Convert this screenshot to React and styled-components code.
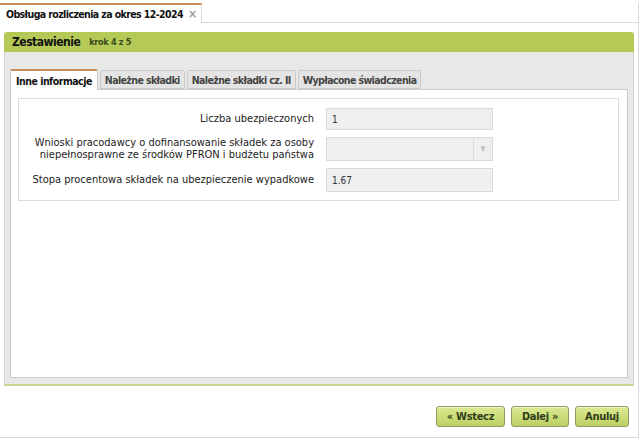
import styled, { createGlobalStyle } from "styled-components";

const FONT = `"DejaVu Sans Condensed", "Liberation Sans", Arial, sans-serif`;

const Global = createGlobalStyle`
  body {
    margin: 0;
    font-family: ${FONT};
    font-size: 11px;
    color: #222;
    background: #fff;
  }
`;

const Page = styled.div`
  width: 642px;
  height: 440px;
  display: flex;
  flex-direction: column;
`;

const TabStrip = styled.div`
  display: flex;
  height: 23px;
  padding-top: 3px;
  box-sizing: border-box;
  width: 639px;
`;

const DocTab = styled.div`
  display: flex;
  align-items: center;
  gap: 5px;
  padding: 0 10px 0 6px;
  width: 202px;
  box-sizing: border-box;
  border-top: 2px solid #c38d55;
  border-right: 1px solid #d8d8e0;
  font-weight: bold;
  font-size: 10.5px;
  letter-spacing: -0.6px;
  color: #111;
  white-space: nowrap;
`;

const Close = styled.span`
  color: #9a9a9a;
  font-size: 12px;
  font-weight: bold;
`;

const StripRest = styled.div`
  flex: 1;
  border-bottom: 1px solid #d8d8e0;
  border-right: 1px solid #d8d8e0;
`;

const Main = styled.div`
  width: 639px;
  height: 415px;
  box-sizing: border-box;
  border-right: 1px solid #d8d8e0;
  border-bottom: 1px solid #d8d8e0;
  padding: 9px 4px 0 4px;
  display: flex;
  flex-direction: column;
`;

const Panel = styled.div`
  display: flex;
  flex-direction: column;
  width: 630px;
`;

const PanelHead = styled.div`
  height: 20px;
  background: #b5c957;
  border-radius: 3px 3px 0 0;
  display: flex;
  align-items: center;
  gap: 9px;
  padding-left: 8px;
`;

const Title = styled.span`
  font-weight: bold;
  font-size: 12px;
  letter-spacing: -0.5px;
  color: #111;
`;

const Step = styled.span`
  font-weight: bold;
  font-size: 9px;
  letter-spacing: -0.3px;
  color: #3b4a1c;
`;

const PanelBody = styled.div`
  height: 334px;
  box-sizing: border-box;
  background: #e8e8e8;
  border-left: 1px solid #d2d2d2;
  border-right: 1px solid #d2d2d2;
  border-bottom: 2px solid #c8d98f;
  padding: 16px 5px 6px 5px;
  display: flex;
  flex-direction: column;
`;

const Tabs = styled.div`
  display: flex;
  gap: 2px;
  align-items: flex-end;
  height: 21px;
`;

const Tab = styled.div`
  height: ${(p) => (p.$active ? "21px" : "19px")};
  box-sizing: border-box;
  display: flex;
  align-items: center;
  padding: 0 ${(p) => (p.$active ? 5 : 4)}px;
  font-weight: bold;
  font-size: 10.5px;
  letter-spacing: ${(p) => (p.$active ? "-0.5px" : "-0.6px")};
  white-space: nowrap;
  color: ${(p) => (p.$active ? "#111" : "#444")};
  background: ${(p) => (p.$active ? "#fff" : "#e4e4e4")};
  border: 1px solid #c9c9c9;
  border-top: ${(p) => (p.$active ? "2px solid #c38d55" : "1px solid #c9c9c9")};
  border-bottom: ${(p) => (p.$active ? "none" : "1px solid #c9c9c9")};
  border-radius: 2px 2px 0 0;
  margin-bottom: ${(p) => (p.$active ? "-1px" : "0")};
  position: relative;
  z-index: ${(p) => (p.$active ? 1 : 0)};
`;

const TabContent = styled.div`
  flex: 1;
  background: #fff;
  border: 1px solid #cccccc;
  padding: 8px 8px 0 7px;
`;

const Fieldset = styled.div`
  border: 1px solid #dcdcdc;
  padding: 9px 0 8px 0;
  display: grid;
  grid-template-columns: 295px 167px;
  column-gap: 12px;
  row-gap: 7px;
  align-items: center;
`;

const Label = styled.div`
  text-align: right;
  font-size: 11px;
  line-height: 12px;
  white-space: nowrap;
  color: #222;
`;

const Field = styled.div`
  height: ${(p) => (p.$tall ? "24px" : "22px")};
  box-sizing: border-box;
  background: #efefef;
  border: 1px solid #dadada;
  display: flex;
  align-items: center;
  padding-left: 5px;
  font-size: 10px;
  color: #333;
`;

const Select = styled(Field)`
  justify-content: flex-end;
  padding: 0;
`;

const Arrow = styled.div`
  width: 18px;
  height: 100%;
  border-left: 1px solid #dadada;
  display: flex;
  align-items: center;
  justify-content: center;
  color: #bbb;
  font-size: 7px;
`;

const Footer = styled.div`
  flex: 1;
  display: flex;
  justify-content: flex-end;
  align-items: center;
  gap: 6px;
  padding: 9px 5px 0 0;
`;

const Button = styled.button`
  width: ${(p) => p.$w}px;
  height: 21px;
  padding: 0;
  font-family: ${FONT};
  font-weight: bold;
  font-size: 11px;
  letter-spacing: -0.3px;
  color: #2f3d1a;
  background: linear-gradient(#dbe992, #bdd163);
  border: 1px solid #8f9d62;
  border-radius: 3px;
  box-shadow: inset 0 1px 0 #eef5c6;
`;

export default function App() {
  return (
    <Page>
      <Global />
      <TabStrip>
        <DocTab>
          Obsługa rozliczenia za okres 12-2024 <Close>×</Close>
        </DocTab>
        <StripRest />
      </TabStrip>
      <Main>
        <Panel>
          <PanelHead>
            <Title>Zestawienie</Title>
            <Step>krok 4 z 5</Step>
          </PanelHead>
          <PanelBody>
            <Tabs>
              <Tab $active>Inne informacje</Tab>
              <Tab>Należne składki</Tab>
              <Tab>Należne składki cz. II</Tab>
              <Tab>Wypłacone świadczenia</Tab>
            </Tabs>
            <TabContent>
              <Fieldset>
                <Label>Liczba ubezpieczonych</Label>
                <Field>1</Field>
                <Label>
                  Wnioski pracodawcy o dofinansowanie składek za osoby
                  <br />
                  niepełnosprawne ze środków PFRON i budżetu państwa
                </Label>
                <Select $tall>
                  <Arrow>▼</Arrow>
                </Select>
                <Label>Stopa procentowa składek na ubezpieczenie wypadkowe</Label>
                <Field $tall>1.67</Field>
              </Fieldset>
            </TabContent>
          </PanelBody>
        </Panel>
        <Footer>
          <Button $w={69}>« Wstecz</Button>
          <Button $w={58}>Dalej »</Button>
          <Button $w={54}>Anuluj</Button>
        </Footer>
      </Main>
    </Page>
  );
}
